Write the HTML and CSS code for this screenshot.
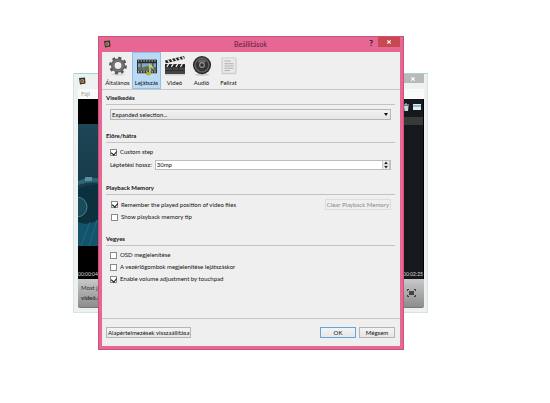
FILE: index.html
```html
<!DOCTYPE html>
<html lang="hu">
<head>
<meta charset="utf-8">
<title>Beállítások</title>
<link rel="stylesheet" href="styles.css">
</head>
<body>
<main class="desktop">
  <section class="player">
    <header class="player-title">
      <svg class="app-icon" viewBox="0 0 8 8"><path d="M1 1l6-.5.5 6L2 7.500z" fill="#333"/><circle cx="4.200" cy="4" r="2" fill="#b39a58"/><circle cx="4" cy="4" r="1" fill="#913f2b"/></svg>
      <button class="player-close" aria-label="Bezárás"><svg viewBox="0 0 8 8"><path d="M2.300 2.300l3.400 3.400M5.700 2.300L2.300 5.700" stroke="#fff" stroke-width="1.200"/></svg></button>
    </header>
    <nav class="player-menu">Fájl</nav>
    <div class="stage">
      <div class="video">
        <svg class="scene" viewBox="0 0 27 122" preserveAspectRatio="none">
          <defs><linearGradient id="sea" x2="0" y2="1"><stop offset="0" stop-color="#1d4656"/><stop offset=".5" stop-color="#163b4a"/><stop offset="1" stop-color="#164d61"/></linearGradient></defs>
          <path fill="url(#sea)" d="M0 0h27v122H0z"/>
          <path d="M0 57q13-6 27-1v4q-13-4-27 1z" fill="#2d6477"/>
          <path d="M0 65q16-7 27-3v60H0z" fill="#0d303e"/>
          <path d="M7 53h7v4H7z" fill="#5890a0"/>
          <circle cx="-1" cy="83" r="10" fill="#194b5b" stroke="#477f8e"/>
          <path d="M0 98q13 6 27-8v32H0z" fill="#14546b"/>
          <path d="M3 122l9-24M11 122l8-26" stroke="#1f6880"/>
        </svg>
        <time class="stamp">00:00:04</time>
      </div>
      <aside class="playlist">
        <div class="playlist-tools">
          <svg viewBox="0 0 8 8"><path d="M1 2h6M3 1h2" stroke="#c9dbe2"/><path d="M2 3h4.500L6 8H2.500z" fill="#c9dbe2"/></svg>
          <svg viewBox="0 0 8 8"><path d="M0 1h8v6H0z" fill="#e2edf0"/><path d="M0 3h8" stroke="#3787ac"/></svg>
        </div>
        <div class="playlist-row"></div>
        <time class="stamp end">00:02:25</time>
      </aside>
    </div>
    <footer class="player-bar">
      <p>Most játszott<br><b>videó.mp4</b></p>
      <svg class="fullscreen" viewBox="0 0 9 8"><path d="M.5 2V.5H2M7 .5h1.500V2M.5 6v1.500H2M7 7.500h1.500V6" fill="none" stroke="#333"/><path d="M2 2h5v4H2z" fill="#444"/></svg>
    </footer>
  </section>

  <section class="dialog" role="dialog" aria-labelledby="title">
    <header class="titlebar">
      <svg class="app-icon" viewBox="0 0 8 8"><path d="M1 1l6-.5.5 6L2 7.500z" fill="#333"/><circle cx="4.200" cy="4" r="2" fill="#b39a58"/><circle cx="4" cy="4" r="1" fill="#913f2b"/></svg>
      <h1 id="title">Beállítások</h1>
      <button class="help">?</button>
      <button class="close" aria-label="Bezárás"><svg viewBox="0 0 8 8"><path d="M2.300 2.300l3.400 3.400M5.700 2.300L2.300 5.700" stroke="#fff" stroke-width="1.100"/></svg></button>
    </header>
    <form class="content">
      <nav class="tabs">
        <button type="button" class="tab">
          <svg viewBox="0 0 22 22"><ellipse cx="11" cy="20.500" rx="8" ry="1" fill="#d6d6d6"/><circle cx="11" cy="10.500" r="8.300" fill="none" stroke="#555" stroke-width="3" stroke-dasharray="3.260 3.260"/><circle cx="11" cy="10.500" r="5.800" fill="none" stroke="#656565" stroke-width="4"/><circle cx="11" cy="10.500" r="5.500" fill="none" stroke="#818181"/></svg>
          <span>Általános</span></button>
        <button type="button" class="tab active">
          <svg viewBox="0 0 22 22"><path d="M0 4h22v15H0z" fill="#292929"/><path d="M1 5.500h20M1 17.500h20" stroke="#d8dcdc" stroke-width="1.300" stroke-dasharray="1.500 1.500"/><path d="M1 8h3v8H1zM5 8h12v8H5zM18 8h3v8h-3z" fill="#83a9c0"/><path d="M1 12h3v4H1zM5 13l6-2 6 2v3H5zM18 12h3v4h-3z" fill="#65705b"/><path d="M13.500 19V8c1 3 5.500 3 4.500 7-1-2-2-2.500-3-2.500V19z" fill="#d8db58"/><ellipse cx="12.500" cy="19.500" rx="2.800" ry="2" fill="#adb922"/></svg>
          <span>Lejátszás</span></button>
        <button type="button" class="tab">
          <svg viewBox="0 0 22 22"><path d="M0 9h22v11H0z" fill="#414548"/><path d="M0 12.500h22M0 16h22M8 12v4M15 12v4" stroke="#2d3032"/><path d="M0 5l21-5 .7 3L1 8zM0 9h22v3H0z" fill="#202020"/><path d="M3 4.500l2 2.500M7 3.500l2 2.500M11 2.600l2 2.500M15 1.600l2 2.500M19 .6l1.500 2.500M2 12l2-3M7 12l2-3M12 12l2-3M17 12l2-3" stroke="#eee" stroke-width="1.500"/><path d="M1 21h20" stroke="#d3d3d3"/></svg>
          <span>Videó</span></button>
        <button type="button" class="tab">
          <svg viewBox="0 0 22 22"><ellipse cx="11" cy="20.500" rx="8" ry="1.500" fill="#cfcfcf"/><circle cx="11" cy="10" r="10" fill="#262626"/><circle cx="11" cy="10" r="8.500" fill="#606060"/><circle cx="11" cy="10" r="6.800" fill="#343434"/><path d="M11 10L6 5.500q5-4 10 0z" fill="#666"/><circle cx="11" cy="10" r="3.200" fill="#969696"/><circle cx="11" cy="10" r="2" fill="#343434"/></svg>
          <span>Audió</span></button>
        <button type="button" class="tab">
          <svg viewBox="0 0 22 22"><path d="M3 3h16v17H3z" fill="#c5c5c5"/><path d="M3.500 2h15v17h-15z" fill="#e9e9e9" stroke="#cfcfcf"/><path d="M6 5.500h7M6 8.500h10M6 11h10M6 13.500h10M6 16h6" stroke="#ababab"/></svg>
          <span>Felirat</span></button>
      </nav>

      <section class="group behavior">
        <h2>Viselkedés</h2>
        <div class="dropdown">
          <select aria-label="Viselkedés"><option>Expanded selection...</option></select>
          <svg viewBox="0 0 4 3"><path d="M0 0h4L2 3z" fill="#111"/></svg>
        </div>
      </section>
      <section class="group seek">
        <h2>Előre/hátra</h2>
        <label class="check"><input type="checkbox" checked>Custom step</label>
        <div class="step"><label for="step">Léptetési hossz:</label>
          <span class="spin"><input id="step" type="text" value="30mp"><svg viewBox="0 0 8 8"><path d="M0 0h8v8H0z" fill="#c8c8c8"/><path d="M1 0h6v3.500H1zM1 4.500h6V8H1z" fill="#eee"/><path d="M4 .5L2.200 3h3.600zM4 7.500L2.200 5h3.600z" fill="#222"/></svg></span></div>
      </section>
      <section class="group memory">
        <h2>Playback Memory</h2>
        <div class="remember"><label class="check"><input type="checkbox" checked>Remember the played position of video files</label><button type="button" class="btn" disabled>Clear Playback Memory</button></div>
        <label class="check"><input type="checkbox">Show playback memory tip</label>
      </section>
      <section class="group misc">
        <h2>Vegyes</h2>
        <label class="check"><input type="checkbox">OSD megjelenítése</label>
        <label class="check"><input type="checkbox">A vezérlőgombok megjelenítése lejátszáskor</label>
        <label class="check"><input type="checkbox" checked>Enable volume adjustment by touchpad</label>
      </section>

      <footer class="actions">
        <button type="button" class="btn reset">Alapértelmezések visszaállítása</button>
        <button type="button" class="btn ok">OK</button>
        <button type="button" class="btn">Mégsem</button>
      </footer>
    </form>
  </section>
</main>
</body>
</html>
```
FILE: styles.css
```css
* { box-sizing: border-box; }
body {
  margin: 0;
  background: #fff;
  color: #111;
  font: 6px/8px Lato, "Open Sans", sans-serif;
}
button, input, select { margin: 0; font: inherit; color: inherit; }
h1, h2, p { margin: 0; font-size: inherit; }
svg { display: block; flex: none; }
.desktop { position: relative; min-height: 100vh; }
.app-icon { width: 8px; height: 8px; }

/* Player window, partly covered by the dialog */
.player {
  position: absolute;
  left: 73px;
  top: 73px;
  width: 355px;
  padding: 0 3px 4px 4px;
  background: #eef1f1;
  border: 1px solid #d8e3e3;
  border-top-color: #9fd6d4;
}
.player-title { display: flex; justify-content: space-between; height: 15px; }
.player-title .app-icon { margin-top: 3px; }
.player-close { width: 22px; height: 9px; padding: 0; border: 0; background: #b9b9b9; }
.player-close svg { width: 8px; height: 8px; margin: auto; }
.player-menu { height: 10px; padding: 1px 3px; background: #f8fafa; color: #999; }
.stage { display: flex; justify-content: space-between; background: #000; }
.video { width: 60px; padding-top: 25px; }
.scene { width: 27px; height: 122px; margin-bottom: 18px; }
.stamp { display: block; height: 15px; padding-top: 6px; color: #ddd; font-size: 5px; }
.playlist { display: flex; flex-direction: column; width: 30px; background: #15181c; border-right: 1px solid #000; }
.playlist-tools { display: flex; justify-content: flex-end; gap: 3px; height: 18px; padding: 4px 2px; }
.playlist-tools svg { width: 8px; height: 8px; }
.playlist-row { height: 8px; background: #393939; }
.end { margin-top: auto; text-align: right; }
.player-bar {
  display: flex;
  align-items: center;
  justify-content: space-between;
  height: 29px;
  padding: 0 8px 0 3px;
  background: linear-gradient(#c8c8c8, #8d8d8d);
  border-bottom: 1px solid #777;
  border-radius: 0 0 2px 2px;
  color: #333;
  line-height: 10px;
}
.fullscreen { width: 9px; height: 8px; }

/* Settings dialog */
.dialog {
  position: absolute;
  left: 98px;
  top: 36px;
  width: 306px;
  padding: 0 3px 3px;
  background: #e66794;
  border: 1px solid #c9517c;
}
.titlebar { display: flex; height: 15px; padding-left: 1px; }
.titlebar .app-icon { margin-top: 3px; }
.titlebar h1 { flex: 1; padding-left: 26px; color: #5c2039; font-size: 7px; font-weight: 400; line-height: 15px; text-align: center; }
.help { width: 14px; height: 11px; padding: 0; border: 0; background: none; font-size: 8px; font-weight: 700; }
.close { width: 22px; height: 10px; padding: 0; border: 0; background: #c9474f; }
.close svg { width: 8px; height: 8px; margin: auto; }
.content { background: #efefef; }
.tabs { display: flex; height: 38px; padding-left: 1px; border-bottom: 1px solid #c8c8c8; }
.tab {
  display: flex;
  flex-direction: column;
  align-items: center;
  justify-content: space-between;
  width: 27px;
  padding: 2px 0 1px;
  border: 1px solid transparent;
  background: none;
  white-space: nowrap;
}
.tab:first-child, .tab.active { width: 29px; }
.tab.active { background: #b9d9f5; border-color: #8fbee6; }
.tab svg { width: 20px; height: 22px; }

.group { display: flex; flex-direction: column; padding: 0 5px 0 8px; }
.group h2 { height: 12px; margin: 0 0 4px -4px; padding-top: 1px; border-bottom: 1px solid #c3c3c3; font-weight: 700; }
.behavior { height: 41px; padding-top: 3px; }
.dropdown { position: relative; margin-right: 4px; }
.dropdown select {
  display: block;
  width: 100%;
  height: 11px;
  padding: 0 1px;
  appearance: none;
  border: 1px solid #b5b5b5;
  border-radius: 0;
  background: linear-gradient(#f2f2f2, #e4e4e4);
}
.dropdown svg { position: absolute; right: 3px; top: 4px; width: 4px; height: 3px; pointer-events: none; }
.seek { height: 52px; }
.seek .check { margin: 1px 0 4px; }
.step { display: flex; align-items: center; gap: 3px; margin-right: 4px; }
.spin { display: flex; flex: 1; border: 1px solid #bdbdbd; background: #fff; }
.spin input { flex: 1; min-width: 0; height: 8px; padding: 0 1px; border: 0; background: none; outline: 0; }
.spin svg { width: 8px; height: 8px; }
.check { display: flex; align-items: center; gap: 3px; height: 8px; white-space: nowrap; }
.check input {
  position: relative;
  flex: none;
  width: 7px;
  height: 7px;
  appearance: none;
  border: 1px solid #8a8a8a;
  background: #fff;
}
.check input:checked::after {
  content: "";
  position: absolute;
  left: 1px;
  top: 0;
  width: 3px;
  height: 4px;
  border: solid #111;
  border-width: 0 1px 1px 0;
  transform: rotate(40deg);
}
.memory { height: 51px; }
.memory > .check, .remember { padding-left: 1px; }
.remember { display: flex; align-items: center; justify-content: space-between; height: 11px; margin: 0 4px 3px 0; }
.misc { gap: 4px; height: 84px; }
.misc h2 { margin-bottom: 1px; }

.btn {
  height: 11px;
  padding: 0 1px;
  border: 1px solid #b5b5b5;
  background: linear-gradient(#f3f3f3, #e6e6e6);
  line-height: 8px;
  white-space: nowrap;
}
.btn:disabled { border-color: #dcdcdc; background: #efefef; color: #888; }
.actions { display: flex; gap: 3px; height: 28px; padding: 8px 5px 0 4px; border-top: 1px solid #c8c8c8; }
.actions .btn { min-width: 36px; }
.reset { margin-right: auto; }
.actions .ok { border-color: #64a4da; }
```
